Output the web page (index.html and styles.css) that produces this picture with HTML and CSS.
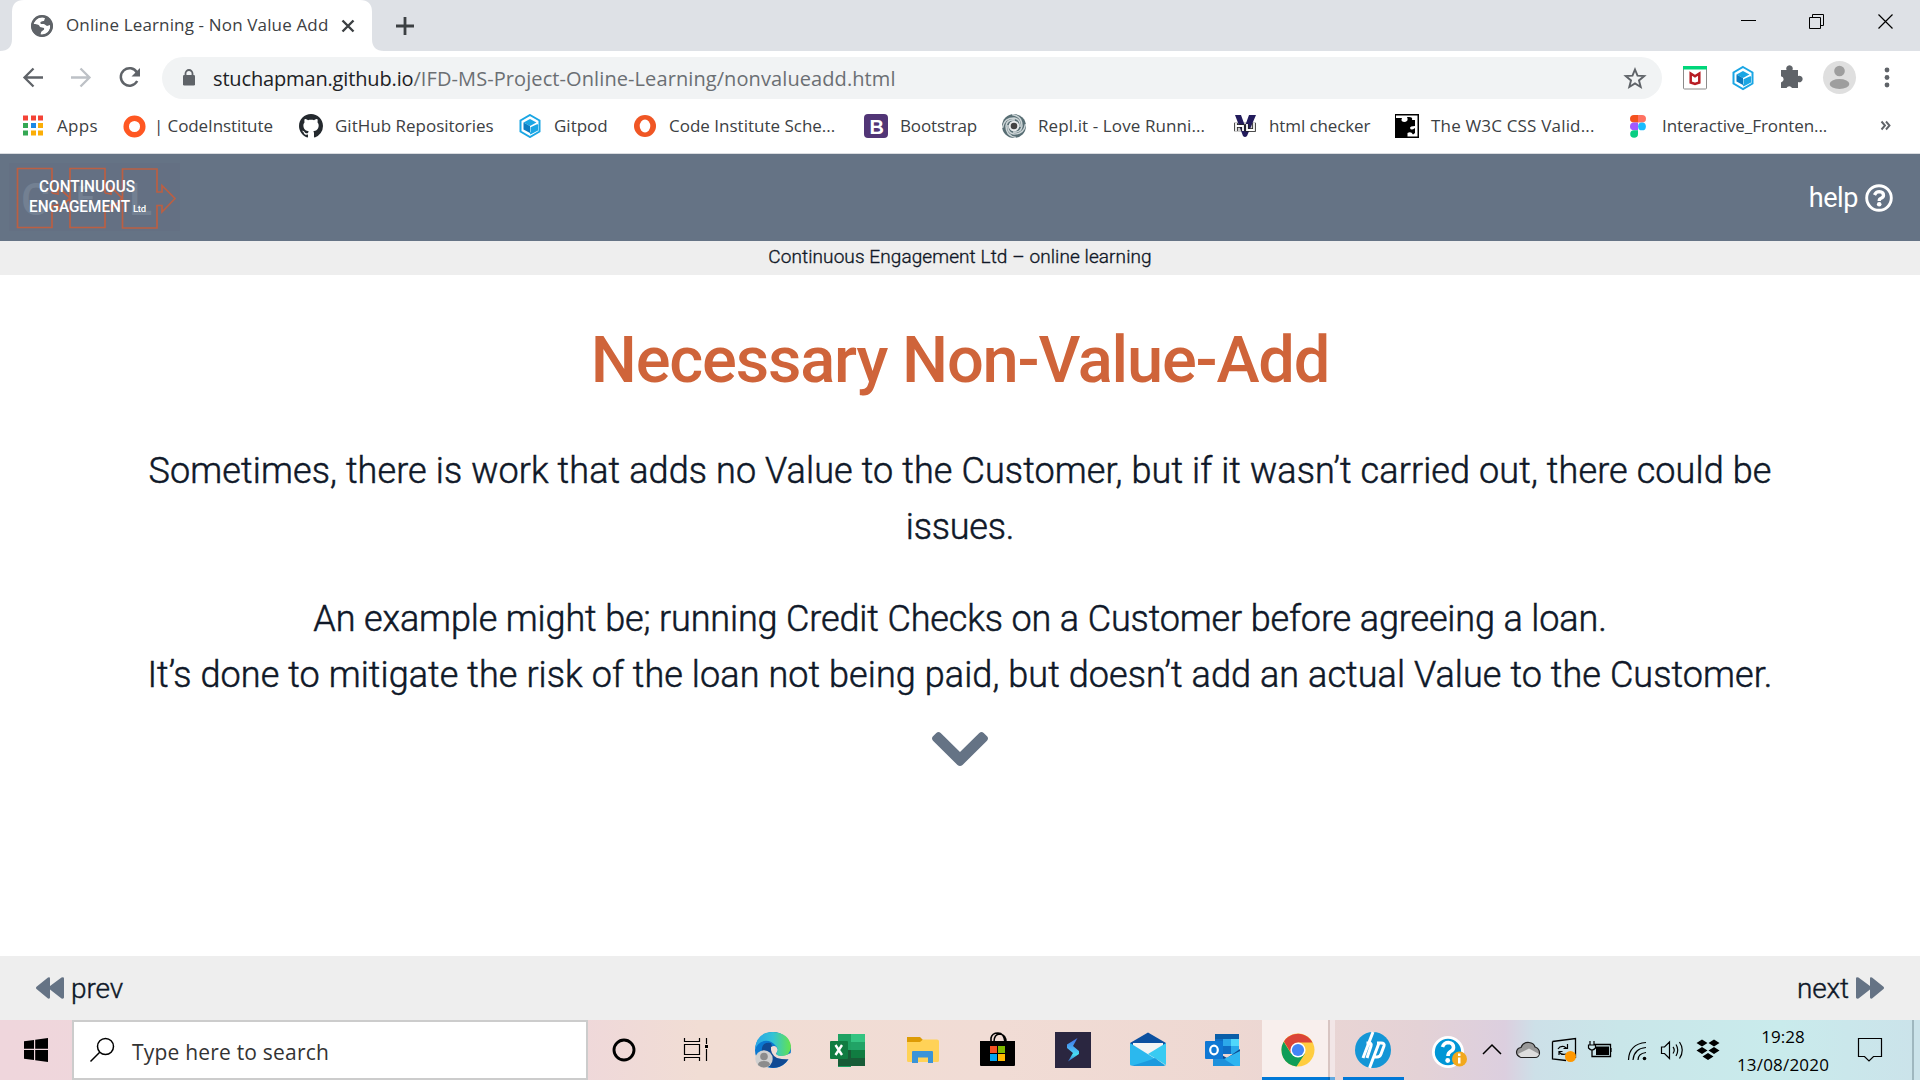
FILE: index.html
```html
<!DOCTYPE html>
<html lang="en">
<head>
<meta charset="utf-8">
<title>Online Learning - Non Value Add</title>
<link rel="stylesheet" href="styles.css">
</head>
<body>
<div class="screen">
  <div class="tabstrip">
    <svg class="tabshape" width="384" height="51" viewBox="0 0 384 51"><path fill="#fff" d="M0 51Q12 51 12 39V12Q12 0 24 0H360Q372 0 372 12V39Q372 51 384 51Z"/></svg>
    <div class="tab">
      <svg width="22" height="22" viewBox="31 14 22 22"><circle cx="42" cy="25" r="11" fill="#5f6368"/><path fill="#fff" d="M43 16q-7 0-10 7c3 0 6 0 7 3l4 1c1 3-3 2-3 5l-1 2c7 1 11-5 10-10l-3 1-3-2-3 0c-2-2 1-3 3-3l1-3q-2-1-2-1z"/><circle cx="42" cy="25" r="9.6" fill="none" stroke="#5f6368" stroke-width="2.2"/></svg>
      <span class="tab-title">Online Learning - Non Value Add</span>
      <svg width="14" height="14" viewBox="341 18 14 14"><path d="M342.500 19.500 353.500 30.500M353.500 19.500 342.500 30.500" stroke="#3c4043" stroke-width="2.4"/></svg>
    </div>
    <svg class="newtab" width="20" height="20" viewBox="395 15 20 20"><path d="M396 25H414M405 16V34" stroke="#3c4043" stroke-width="2.8"/></svg>
    <svg class="winctl" width="180" height="51" viewBox="1730 0 180 51"><g fill="none" stroke="#000"><path d="M1741 20.500H1756M1809.500 17.500H1820.500V28.500H1809.500ZM1812.500 17.500V14.500H1823.500V25.500H1820.500"/><path d="M1878.500 14.500 1892.500 28.500M1892.500 14.500 1878.500 28.500" stroke-width="1.2"/></g></svg>
  </div>

  <div class="toolbar">
    <svg width="162" height="54" viewBox="0 51 162 54" fill="none" stroke-width="2.300"><path stroke="#5f6368" d="M43 77.500H25M33.500 68.500 24.500 77.500 33.500 86.500"/><path stroke="#bdc1c6" d="M71 77.500H89M80.500 68.500 89.500 77.500 80.500 86.500"/><path stroke="#5f6368" stroke-width="2.500" d="M137 72.500A8.700 8.700 0 1 0 137.200 81"/><path fill="#5f6368" d="M140 68V76.500H131.500Z"/></svg>
    <div class="omnibox">
      <svg width="14" height="18" viewBox="182 70 14 18"><rect x="183" y="76" width="12" height="10.500" rx="1.300" fill="#5f6368"/><path d="M185.500 76V74.500a3.500 3.500 0 0 1 7 0V76" fill="none" stroke="#5f6368" stroke-width="1.800"/></svg>
      <span class="url"><span class="host">stuchapman.github.io</span>/IFD-MS-Project-Online-Learning/nonvalueadd.html</span>
      <svg width="24" height="24" viewBox="1623 66 24 24"><path d="M1635 69.500 1637.500 75.700 1644.200 76.100 1639 80.400 1640.700 87 1635 83.400 1629.300 87 1631 80.400 1625.800 76.100 1632.500 75.700Z" fill="none" stroke="#5f6368" stroke-width="1.900"/></svg>
    </div>
    <svg width="258" height="54" viewBox="1662 51 258 54">
      <rect x="1683.500" y="66.500" width="23" height="22.500" rx="1" fill="#fff" stroke="#8b8b8b"/><path fill="#00d67a" d="M1683 66h24v3.500h-24z"/><path d="M1690.700 73.500V82.500L1695 84 1699.300 82.500V73.500L1695 76.300Z" fill="none" stroke="#b81c24" stroke-width="2.500"/>
      <g transform="translate(1743 78)"><path d="M0-11 9.500-5.500V5.500L0 11-9.500 5.500V-5.500Z" fill="#fff" stroke="#1aa6e4" stroke-width="2"/><path fill="#1aa6e4" d="M0-7 6.500-3.500 0 0-6.500-3.500Z"/><path fill="#0b7cc1" d="M-6.500-3.500 0 0V7L-6.500 3.500Z"/><path fill="none" stroke="#1aa6e4" stroke-width="2" d="M8-1 1.500 2V4.500L7 1.500V4L0 7.500"/></g>
      <path fill="#5f6368" d="M1781 70h5.500a3.300 3.300 0 1 1 6 0h5.500v6a3.300 3.300 0 1 1 0 6v6h-6a3 3 0 0 0-5.500 0h-5.500v-5.500a3.200 3.200 0 0 0 0-6.300z"/>
      <circle cx="1839.500" cy="77.500" r="16.500" fill="#dfdfdf"/><circle cx="1839.500" cy="71" r="5.300" fill="#9e9e9e"/><ellipse cx="1839.500" cy="84" rx="9.800" ry="5" fill="#9e9e9e"/>
      <g fill="#5f6368"><circle cx="1887" cy="70" r="2.400"/><circle cx="1887" cy="77.500" r="2.400"/><circle cx="1887" cy="85" r="2.400"/></g>
    </svg>
  </div>

  <div class="bookmarks">
    <div class="bm bm-apps"><svg width="24" height="24" viewBox="21 114 24 24"><path fill="#f44336" d="M23 115.500h5v5h-5zM31 115.500h5v5h-5zM38 115.500h5v5h-5z"/><path fill="#34a853" d="M23 123h5v5h-5zM23 130.500h5v5h-5z"/><path fill="#1e88e5" d="M31 123h5v5h-5z"/><path fill="#fbae07" d="M38 123h5v5h-5zM31 130.500h5v5h-5zM38 130.500h5v5h-5z"/></svg><span>Apps</span></div>
    <div class="bm bm-ci"><svg width="24" height="24" viewBox="0 0 24 24"><circle cx="12.500" cy="12.500" r="8.300" fill="none" stroke="#ff5722" stroke-width="5.500"/></svg><span>| CodeInstitute</span></div>
    <div class="bm bm-gh"><svg width="24" height="24" viewBox="0 0 16 16"><path fill="#24292e" d="M8 0C3.580 0 0 3.580 0 8c0 3.540 2.290 6.530 5.470 7.590.4.070.55-.17.55-.38 0-.19-.01-.82-.01-1.490-2.010.37-2.530-.49-2.690-.94-.09-.23-.48-.94-.82-1.130-.28-.15-.68-.52-.01-.53.63-.01 1.080.58 1.230.82.72 1.210 1.870.87 2.330.66.070-.52.28-.87.51-1.070-1.780-.2-3.640-.89-3.640-3.950 0-.87.31-1.590.82-2.150-.08-.2-.36-1.020.08-2.120 0 0 .67-.21 2.200.82.64-.18 1.320-.27 2-.27s1.360.09 2 .27c1.530-1.040 2.200-.82 2.200-.82.44 1.100.16 1.920.08 2.120.51.56.82 1.270.82 2.150 0 3.070-1.870 3.750-3.650 3.950.29.25.54.73.54 1.480 0 1.070-.01 1.930-.01 2.200 0 .21.15.46.55.38A8.010 8.010 0 0 0 16 8c0-4.420-3.580-8-8-8z"/></svg><span>GitHub Repositories</span></div>
    <div class="bm bm-gp"><svg width="24" height="24" viewBox="-12 -12 24 24"><path d="M0-11 9.500-5.500V5.500L0 11-9.500 5.500V-5.500Z" fill="#fff" stroke="#1aa6e4" stroke-width="2"/><path fill="#1aa6e4" d="M0-7 6.500-3.500 0 0-6.500-3.500Z"/><path fill="#0b7cc1" d="M-6.500-3.500 0 0V7L-6.500 3.500Z"/><path fill="none" stroke="#1aa6e4" stroke-width="2" d="M8-1 1.500 2V4.500L7 1.500V4L0 7.500"/></svg><span>Gitpod</span></div>
    <div class="bm bm-sc"><svg width="24" height="24" viewBox="0 0 24 24"><circle cx="12" cy="12" r="11" fill="#f05624"/><ellipse cx="12" cy="12" rx="5.300" ry="6.500" fill="#fff"/></svg><span>Code Institute Sche...</span></div>
    <div class="bm bm-bs"><svg width="24" height="24" viewBox="0 0 24 24"><rect width="24" height="24" rx="4" fill="#513576"/><text x="5.500" y="19.500" font-family="Liberation Sans" font-weight="700" font-size="20" fill="#fff">B</text></svg><span>Bootstrap</span></div>
    <div class="bm bm-rp"><svg width="24" height="24" viewBox="-12 -12 24 24"><circle r="12" fill="#586e74"/><g fill="none" stroke="#cdd5d7" stroke-width="1.500"><path id="sw" d="M-11.500 2Q-10-8 0-8Q7-7 6 1"/><use href="#sw" transform="rotate(90)"/><use href="#sw" transform="rotate(180)"/><use href="#sw" transform="rotate(270)"/></g><circle r="4.300" fill="#444" stroke="#e8ebec" stroke-width="2"/></svg><span>Repl.it - Love Runni...</span></div>
    <div class="bm bm-hu"><svg width="24" height="24" viewBox="0 0 24 24"><path fill="#999" opacity=".5" d="M1 8H23V18H1z"/><path fill="#231c5c" d="M2 1H8L12 12 16 1H23L14 22Q12 24 10 22Z"/><path fill="none" stroke="#222" stroke-width="3.500" d="M3 9V17M3 12H10V17M14 10V16H21V9"/><path fill="none" stroke="#fff" stroke-width="1.800" d="M3 9V17M3 12H10V17M14 10V16H21V9"/></svg><span>html checker</span></div>
    <div class="bm bm-w3"><svg width="24" height="24" viewBox="0 0 24 24"><path d="M0 0H24V24H0Z"/><path fill="#fff" d="M1 1.500H22.500V22.500H12.500V19Q16 17 18 20.500L20 19V14Q16 17 15 14Q15 12 20 12V6H17Q18 3 14 3H12Q14 7 10 8Q5 8 7 4H1Z"/></svg><span>The W3C CSS Valid...</span></div>
    <div class="bm bm-fg"><svg width="24" height="24" viewBox="0 0 24 24"><path fill="#f4511e" d="M12 1H8a4 3.800 0 0 0 0 7.600h4z"/><path fill="#ff7262" d="M12 1h4a4 3.800 0 0 1 0 7.600h-4z"/><path fill="#a259ff" d="M12 8.600H8a4 3.800 0 0 0 0 7.600h4z"/><circle cx="16" cy="12.400" r="3.900" fill="#1abcfe"/><path fill="#0acf83" d="M12 16.200H8a3.900 3.800 0 1 0 4 3.800z"/></svg><span>Interactive_Fronten...</span></div>
    <svg width="12" height="12" viewBox="1880 120 12 12"><path d="M1881.500 121.500 1885 125.500 1881.500 129.500M1886 121.500 1889.500 125.500 1886 129.500" fill="none" stroke="#5f6368" stroke-width="1.900"/></svg>
  </div>

  <header class="site-head">
    <svg width="192" height="87" viewBox="0 154 192 87">
      <rect x="9" y="163" width="171" height="68" fill="#647083"/>
      <g font-family="Roboto, sans-serif" font-weight="500" fill="#738092"><text x="21" y="215" font-size="45" textLength="29" lengthAdjust="spacingAndGlyphs">C</text><text x="76" y="210" font-size="34">E</text><text x="129" y="215" font-size="45" textLength="23" lengthAdjust="spacingAndGlyphs">L</text></g>
      <g fill="none" stroke="#bb5f43" stroke-width="1.700"><path d="M52 193V168.500H17.500V227.500H52V206M52 193l6 1V187L70 198 58 210V205L52 206M105 193V168.500H70V227.500H105V206M105 193l6 1V187L122 198 111 210V205L105 206M157 192V169H122.500V228H157V205.500H162V212L175 198.500 162 185.500V192Z"/></g>
      <g font-family="Roboto, sans-serif" font-weight="500" fill="#fff"><text x="39" y="191.500" font-size="16" textLength="96" lengthAdjust="spacingAndGlyphs">CONTINUOUS</text><text x="29" y="211.500" font-size="16" textLength="101" lengthAdjust="spacingAndGlyphs">ENGAGEMENT</text><text x="133" y="211.500" font-size="9.500" textLength="13">Ltd</text></g>
    </svg>
    <div class="help"><span>help</span><svg width="28" height="28" viewBox="0 0 28 28"><circle cx="14" cy="14" r="12.300" fill="none" stroke="#fff" stroke-width="2.900"/><path d="M9.500 11Q11 7.700 14.300 7.700Q18.500 7.900 18.500 11.200Q18.500 13.200 16 14.300Q14.200 15 14.200 17" fill="none" stroke="#fff" stroke-width="3.300"/><circle cx="14.200" cy="20.300" r="2.300" fill="#fff"/></svg></div>
  </header>
  <div class="subhead"><span>Continuous Engagement Ltd – online learning</span></div>

  <main class="content">
    <h1><span>Necessary Non-Value-Add</span></h1>
    <p><span class="l1">Sometimes, there is work that adds no Value to the Customer, but if it wasn’t carried out, there could be</span><br><span class="l2">issues.</span></p>
    <p><span class="l3">An example might be; running Credit Checks on a Customer before agreeing a loan.</span><br><span class="l4">It’s done to mitigate the risk of the loan not being paid, but doesn’t add an actual Value to the Customer.</span></p>
    <svg class="chev" width="58" height="36" viewBox="0 0 58 36"><path fill="#657385" d="M26.500 34 2 9.700Q0 7.500 2 5.300L5.300 2Q7.500 0 9.700 2L29 21 48.300 2Q50.500 0 52.700 2L56 5.300Q58 7.500 56 9.700L31.500 34Q29 36 26.500 34Z"/></svg>
  </main>

  <footer class="pager">
    <div class="pg"><svg width="28" height="22" viewBox="0 0 28 22"><path fill="#657385" d="M.5 9.800 12 .5Q14-.5 14 1.500V9L25.500.5Q28-.5 28 1.500V20.500Q28 22 25.500 21.500L14 12.500V20.500Q14 22 12 21.500L.5 12Q-.5 11 .5 9.800Z"/></svg><span class="prev">prev</span></div>
    <div class="pg"><span class="next">next</span><svg width="28" height="22" viewBox="0 0 28 22"><path transform="matrix(-1 0 0 1 28 0)" fill="#657385" d="M.5 9.800 12 .5Q14-.5 14 1.500V9L25.500.5Q28-.5 28 1.500V20.500Q28 22 25.500 21.500L14 12.500V20.500Q14 22 12 21.500L.5 12Q-.5 11 .5 9.800Z"/></svg></div>
  </footer>

  <div class="taskbar">
    <svg width="72" height="60" viewBox="0 1020 72 60"><path d="M24 1041.300 34 1039.900V1048.800H24ZM35.200 1039.700 48 1037.900V1048.800H35.200ZM24 1050H34V1060.100L24 1058.700ZM35.200 1050H48V1062L35.200 1060.300Z"/></svg>
    <div class="search"><svg width="26" height="26" viewBox="89 1037 26 26"><circle cx="105.500" cy="1046.500" r="8" fill="none" stroke="#000" stroke-width="1.500"/><path d="M99.700 1052.300 90.500 1061.500" stroke="#000" stroke-width="1.500"/></svg><span>Type here to search</span></div>
    <svg width="147" height="60" viewBox="588 1020 147 60"><circle cx="624" cy="1050" r="10" fill="none" stroke="#000" stroke-width="2.900"/><g fill="none" stroke="#000" stroke-width="1.200"><path d="M684.500 1038V1041.500H699.500V1038M684.500 1044.500H699.500V1054.500H684.500ZM684.500 1061V1057.500H699.500V1061M706.500 1038V1044M706.500 1049V1061"/></g><path d="M705 1045h3v3h-3z"/></svg>
    <svg width="75" height="60" viewBox="735 1020 75 60"><defs><linearGradient id="eg"><stop offset="0" stop-color="#2aa5e6"/><stop offset=".5" stop-color="#32c3d6"/><stop offset="1" stop-color="#64e34b"/></linearGradient></defs><circle cx="773" cy="1050" r="18" fill="#0b78d0"/><path fill="#104a93" d="M762 1048Q763 1042 771 1043L774 1052Q774 1058 781 1058Q786 1059 789 1058Q783 1069 771 1067.500Q760 1063 762 1048Z"/><path fill="#f0dcd4" d="M771 1047Q776 1044 778 1050L776 1054Q780 1058 791 1053V1059Q784 1060 777 1058Q770 1054 771 1047Z"/><path fill="url(#eg)" d="M755 1050Q756 1032 773 1032Q789 1033 791 1046Q791 1056 781 1056Q776 1056 776.500 1053Q779 1049 776 1046Q771 1040 764 1041Q757 1043 755 1050Z"/><circle cx="764" cy="1059" r="8.700" fill="#d0d0d0"/><circle cx="764" cy="1056.500" r="3.800" fill="#8c8c8c"/><path fill="#8c8c8c" d="M758 1065q0-4 6-4t6 4q-6 5-12 0"/></svg>
    <svg width="75" height="60" viewBox="810 1020 75 60"><path fill="#1fa162" d="M838 1034h13v33h-13z"/><path fill="#34c481" d="M851 1034h14v8h-14z"/><path fill="#21a366" d="M851 1042h14v8h-14z"/><path fill="#107c41" d="M838 1050h27v8h-27z"/><path fill="#185c37" d="M838 1050h13v8h14v8h-27z"/><rect x="830" y="1041" width="18" height="18" rx="1" fill="#107c41"/><path d="M835.500 1045 842 1055M842 1045 835.500 1055" stroke="#fff" stroke-width="2.400"/></svg>
    <svg width="75" height="60" viewBox="885 1020 75 60"><path fill="#dd9b05" d="M907 1037h13l3 3v2h-16z"/><path fill="#ffd257" d="M907 1042h13l3-2.500h14q2 0 2 2v19q0 1.500-1.500 1.500H908.500q-1.500 0-1.500-1.500z"/><path fill="#3a94d8" d="M912 1052q0-1 1-1h19q1 0 1 1v11h-5v-5.500h-10v5.500h-6z"/></svg>
    <svg width="75" height="60" viewBox="960 1020 75 60"><path d="M991 1042V1038Q992 1033 998 1033Q1004 1033 1005 1042M994 1042Q994 1034 1000 1034Q1006 1035 1006 1042" fill="none" stroke="#000" stroke-width="1.600"/><path d="M980 1041h35v24q0 1-1 1h-33q-1 0-1-1z"/><path fill="#f25022" d="M990 1046h7v7h-7z"/><path fill="#7fba00" d="M998 1046h7v7h-7z"/><path fill="#00a4ef" d="M990 1054h7v7h-7z"/><path fill="#ffb900" d="M998 1054h7v7h-7z"/></svg>
    <svg width="75" height="60" viewBox="1035 1020 75 60"><defs><linearGradient id="sg" x2="0" y2="1"><stop stop-color="#3f6fe8"/><stop offset=".5" stop-color="#4bb8f5"/><stop offset=".7" stop-color="#46dff0"/><stop offset="1" stop-color="#3866cc"/></linearGradient></defs><path fill="#2a2640" d="M1055 1032h36v36h-36z"/><path fill="url(#sg)" d="M1077.500 1038 1067 1044.500V1048L1073 1053 1068 1061.500 1079 1054V1051L1073 1046Z"/></svg>
    <svg width="75" height="60" viewBox="1110 1020 75 60"><path fill="#0c50a0" d="M1130 1043 1148 1032.500 1166 1043V1053H1130Z"/><path fill="#f4f4f4" d="M1133 1043H1163V1055L1148 1062 1133 1054Z"/><path fill="#2bb8ee" d="M1130 1043 1166 1065.500H1131Q1130 1065.500 1130 1064Z"/><path fill="#39cbf2" d="M1166 1043V1065L1148 1054Z"/><path fill="#1c9ade" d="M1131 1066Q1148 1061 1155 1058L1165 1066Z"/></svg>
    <svg width="75" height="60" viewBox="1185 1020 75 60"><path fill="#0a5ea8" d="M1215 1034h24v5h-24z"/><path fill="#0f6fc5" d="M1215 1039h24v15h-24z"/><path fill="#2ca9ea" d="M1223 1039h8v7h-8z"/><path fill="#4fd7fb" d="M1231 1039h8v7h-8z"/><path fill="#28a8ea" d="M1231 1046h8v8h-8z"/><path fill="#0b4a8f" d="M1213 1050 1227 1058 1240 1049V1054L1227 1062 1213 1058Z"/><path fill="#1d91dc" d="M1213 1054 1240 1066H1213Z"/><path fill="#2eb5f0" d="M1240 1051V1066H1235L1224 1059Z"/><rect x="1205" y="1041" width="18" height="18" rx="1" fill="#0f78d4"/><ellipse cx="1214" cy="1050" rx="3.800" ry="4.300" fill="none" stroke="#fff" stroke-width="2.200"/></svg>
    <svg width="75" height="60" viewBox="1260 1020 75 60"><path fill="#f8efed" d="M1262 1020h66v60h-66z"/><path fill="#d8c5c2" d="M1328 1020h2v60h-2z"/><path fill="#f2e6e7" d="M1330 1020h5v60h-5z"/><path fill="#0078d7" d="M1262 1077h66v3h-66z"/><path fill="#0a6cb9" d="M1328 1077h2v3h-2z"/><path fill="#62a9e0" d="M1330 1077h5v3h-5z"/><circle cx="1298" cy="1050" r="16.500" fill="#ffcd40"/><path fill="#0f9d58" d="M1283.700 1041.700A16.500 16.500 0 0 0 1296.500 1066.500L1305 1053.500 1298 1050 1291 1053.500Z"/><path fill="#db4437" d="M1298 1042.500H1312.500A16.500 16.500 0 0 0 1284 1041.400L1291 1053Z"/><circle cx="1298" cy="1050" r="7.600" fill="#fff"/><circle cx="1298" cy="1050" r="6.100" fill="#4285f4"/></svg>
    <svg width="75" height="60" viewBox="1335 1020 75 60"><path fill="#0078d7" d="M1343 1077h61v3h-61z"/><circle cx="1373" cy="1050" r="18" fill="#1496d6"/><g fill="none" stroke="#fff" stroke-width="3"><path d="M1373 1032 1363 1058M1366.500 1043H1369Q1372 1043 1371 1046L1367 1058M1379 1043 1369.500 1068M1377 1043H1381Q1385 1043 1384 1046L1381 1054Q1380 1057 1377 1057H1374"/></g></svg>
    <svg width="320" height="60" viewBox="1410 1020 320 60">
      <circle cx="1448" cy="1052" r="16" fill="#fff"/><circle cx="1448" cy="1052" r="13.200" fill="#0096d6"/><path d="M1442.500 1047Q1444 1042.500 1448.500 1042.500Q1453.500 1043 1453.500 1047.500Q1453.500 1050 1450.500 1051.500Q1448 1053 1448 1056" fill="none" stroke="#fff" stroke-width="3.600"/><circle cx="1447.700" cy="1060.500" r="2.400" fill="#fff"/><circle cx="1459.500" cy="1059" r="7.500" fill="#f2a81d"/><path d="M1458 1057.500h2.500v6h-2.500zM1458 1053.500h2.500v2.500h-2.500z" fill="#fff"/>
      <path d="M1483 1054 1492 1045 1501 1054" fill="none" stroke="#000" stroke-width="1.500"/>
      <path fill="#999" stroke="#222" stroke-width="1.200" d="M1521 1057.500Q1516.500 1056 1516.500 1052Q1517 1048 1521 1047.500Q1523 1042 1529 1042.500Q1534 1043 1535 1047Q1539.500 1048.500 1539.500 1053Q1539 1057.500 1535 1057.500Z"/><path fill="#ddd" d="M1518 1054 1529 1048.500 1539 1054Q1538 1057 1535 1057H1521Z"/>
      <path d="M1552.500 1041.500 1575.500 1038.500V1058M1552.500 1041.500V1059L1566 1060.500" fill="none" stroke="#000" stroke-width="1.300"/><path d="M1558 1049Q1560 1045.500 1564 1046.500L1567 1048.500M1567.500 1044V1048.500H1563.500M1559 1055V1051.500H1562.500M1559 1052Q1562 1055.500 1566 1054" fill="none" stroke="#000" stroke-width="1.200"/><circle cx="1570.500" cy="1056.500" r="5.500" fill="#ff9800"/>
      <path d="M1594 1044.500H1610.500V1056.500H1592V1050M1611 1048v4" fill="none" stroke="#000" stroke-width="1.300"/><path d="M1596 1046.500h13v8.500h-13z"/><path d="M1590 1041V1045M1594 1041V1045M1588.500 1045H1595.500V1048Q1592 1052 1588.500 1048Z" fill="#cae4e8" stroke="#000" stroke-width="1.200"/>
      <g fill="none" stroke="#000" stroke-width="1.200"><path d="M1628.500 1060Q1629 1044 1646 1042.500"/><path d="M1633 1060Q1634 1048.500 1646 1047.500"/><path d="M1638 1060Q1638 1053.500 1646 1052.500"/></g><circle cx="1644.500" cy="1058.500" r="1.800"/>
      <path d="M1661.500 1047H1664.500L1669.500 1042V1058.500L1664.500 1053.500H1661.500ZM1673 1047Q1675.500 1050 1673 1053.500M1676 1044.500Q1679.500 1050 1676 1056M1679.500 1042Q1685 1050 1679.500 1058.500" fill="none" stroke="#000" stroke-width="1.200"/>
      <path d="M1696.500 1043 1702 1039.500 1707.500 1043 1702 1046.500ZM1708.500 1043 1714 1039.500 1719.500 1043 1714 1046.500ZM1696.500 1050.500 1702 1047 1707.500 1050.500 1702 1054ZM1708.500 1050.500 1714 1047 1719.500 1050.500 1714 1054ZM1702.500 1056.500 1708 1053 1713.500 1056.500 1708 1060Z"/>
    </svg>
    <div class="clock"><span class="time">19:28</span><span class="date">13/08/2020</span></div>
    <svg width="82" height="60" viewBox="1838 1020 82 60"><path d="M1858.500 1038.500H1881.500V1056.500H1873.500L1869 1061 1864.500 1056.500H1858.500Z" fill="none" stroke="#000" stroke-width="1.200"/><path fill="#9fb7bf" d="M1912 1020h2v60h-2z"/></svg>
  </div>
</div>
</body>
</html>
```
FILE: styles.css
```css
* { box-sizing: border-box; }
body { margin: 0; font-family: "Open Sans", "Noto Sans", sans-serif; color: #3c4043; }
svg { display: block; flex: none; }
span { white-space: nowrap; }
.screen { width: 1920px; height: 1080px; display: flex; flex-direction: column; overflow: hidden; background: #fff; }

.tabstrip { height: 51px; background: #dee1e6; display: flex; align-items: center; position: relative; }
.tabshape { position: absolute; left: 0; top: 0; }
.tab { position: relative; width: 395px; padding-left: 31px; display: flex; align-items: center; }
.tab-title { width: 275px; margin-left: 13px; padding-bottom: 2px; font-size: 17px; letter-spacing: 0.15px; }
.winctl { margin-left: auto; margin-right: 10px; }

.toolbar { height: 54px; display: flex; align-items: center; }
.omnibox { width: 1500px; height: 42px; border-radius: 21px; background: #f1f3f4; display: flex; align-items: center; padding: 0 15px 0 20px; }
.url { margin-left: 17px; margin-right: auto; font-size: 20px; letter-spacing: 0.09px; color: #6b6f73; }
.host { letter-spacing: -0.15px; color: #202124; }

.bookmarks { height: 49px; border-bottom: 1px solid #dadce0; display: flex; align-items: center; padding: 0 0 6px 21px; font-size: 17px; }
.bm { display: flex; align-items: center; gap: 12px; }
.bm span { padding-bottom: 2px; }
.bm-apps { width: 101px; letter-spacing: 0.3px; }
.bm-ci { width: 177px; gap: 8px; letter-spacing: -0.1px; }
.bm-gh { width: 219px; }
.bm-gp { width: 115px; }
.bm-sc { width: 231px; }
.bm-bs { width: 138px; letter-spacing: -0.15px; }
.bm-rp { width: 231px; letter-spacing: 0.1px; }
.bm-hu { width: 162px; letter-spacing: -0.1px; }
.bm-w3 { width: 231px; letter-spacing: 0.18px; }
.bm-fg { width: 254px; letter-spacing: -0.08px; }

.site-head { height: 87px; background: #657385; display: flex; justify-content: space-between; align-items: center; padding-right: 27px; font-family: Roboto, sans-serif; }
.help { display: flex; align-items: center; gap: 7px; color: #fff; font-size: 27px; letter-spacing: -0.4px; }
.subhead { height: 34px; background: #eee; color: #111827; text-align: center; font: 300 19px/31px Roboto, sans-serif; letter-spacing: 0.09px; -webkit-text-stroke: 0.35px; }

.content { height: 681px; text-align: center; font-family: Roboto, sans-serif; font-weight: 300; color: #0f1828; padding-top: 47px; }
h1 { margin: 0; font-size: 65px; line-height: 77px; font-weight: 500; letter-spacing: -1.2px; color: #cf643a; }
p { margin: 0; font-size: 36px; line-height: 56px; -webkit-text-stroke: 0.5px; }
h1 + p { margin-top: 44px; }
p + p { margin-top: 36px; }
.l1 { letter-spacing: 0.11px; }
.l2 { letter-spacing: -0.2px; }
.l3 { letter-spacing: -0.13px; }
.l4 { letter-spacing: 0.08px; }
.chev { margin: 28px auto 0; }

.pager { height: 64px; background: #eee; display: flex; justify-content: space-between; align-items: center; padding: 0 36px; font-family: Roboto, sans-serif; font-weight: 300; font-size: 28px; letter-spacing: -0.1px; -webkit-text-stroke: 0.4px; color: #0f1828; }
.pg { display: flex; align-items: center; gap: 7px; }

.taskbar { height: 60px; display: flex; background: linear-gradient(90deg, #efd6dc 0, #efd8da 580px, #f1ddd4 700px, #f1dcd5 1000px, #eed8d2 1230px, #e4d2d6 1420px, #dccfdf 1505px, #cde0e8 1535px, #c9e6e9 1620px, #c9ebec 1780px, #cbe3ea 1915px); }
.search { width: 516px; border: 2px solid #ccc; background: #fff; display: flex; align-items: center; gap: 17px; padding-left: 15px; font-size: 21px; letter-spacing: 0.2px; color: #333; }
.search span { padding-top: 3px; }
.clock { width: 108px; display: flex; flex-direction: column; align-items: center; font-size: 17px; line-height: 28px; color: #000; padding: 3px 2px 0 0; }
.date { letter-spacing: 0.2px; }
```
